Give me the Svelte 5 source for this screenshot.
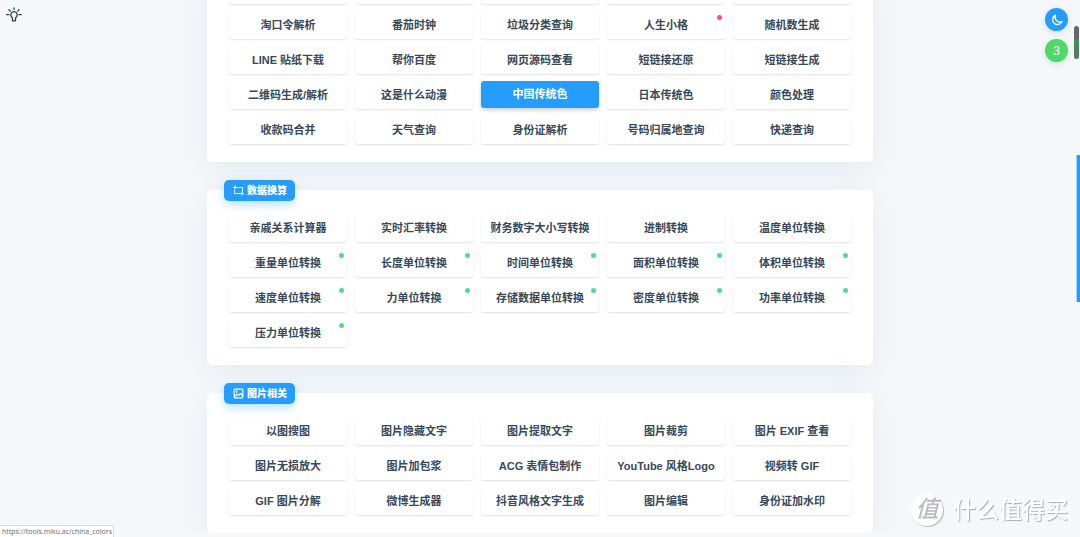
<!-- App.svelte -->
<script>
	let active = '中国传统色';

	const groups = [
		{
			title: '',
			icon: '',
			tools: [
				'',
				'',
				'',
				'',
				'',
				'淘口令解析',
				'番茄时钟',
				'垃圾分类查询',
				{ name: '人生小格', dot: 'hot' },
				'随机数生成',
				'LINE 贴纸下载',
				'帮你百度',
				'网页源码查看',
				'短链接还原',
				'短链接生成',
				'二维码生成/解析',
				'这是什么动漫',
				'中国传统色',
				'日本传统色',
				'颜色处理',
				'收款码合并',
				'天气查询',
				'身份证解析',
				'号码归属地查询',
				'快递查询'
			]
		},
		{
			title: '数据换算',
			icon: 'swap',
			tools: [
				'亲戚关系计算器',
				'实时汇率转换',
				'财务数字大小写转换',
				'进制转换',
				'温度单位转换',
				{ name: '重量单位转换', dot: 'new' },
				{ name: '长度单位转换', dot: 'new' },
				{ name: '时间单位转换', dot: 'new' },
				{ name: '面积单位转换', dot: 'new' },
				{ name: '体积单位转换', dot: 'new' },
				{ name: '速度单位转换', dot: 'new' },
				{ name: '力单位转换', dot: 'new' },
				{ name: '存储数据单位转换', dot: 'new' },
				{ name: '密度单位转换', dot: 'new' },
				{ name: '功率单位转换', dot: 'new' },
				{ name: '压力单位转换', dot: 'new' }
			]
		},
		{
			title: '图片相关',
			icon: 'image',
			tools: [
				'以图搜图',
				'图片隐藏文字',
				'图片提取文字',
				'图片裁剪',
				'图片 EXIF 查看',
				'图片无损放大',
				'图片加包浆',
				'ACG 表情包制作',
				'YouTube 风格Logo',
				'视频转 GIF',
				'GIF 图片分解',
				'微博生成器',
				'抖音风格文字生成',
				'图片编辑',
				'身份证加水印'
			]
		}
	].map((group) => ({
		...group,
		tools: group.tools.map((tool) => (typeof tool === 'string' ? { name: tool } : tool))
	}));
</script>

<button class="bulb" aria-label="提示">
	<svg viewBox="0 0 16 16" width="16" height="16">
		<path d="M8 4.7a3.2 3.2 0 0 0-1.9 5.8c.3.3.4.6.4 1v2.3h3v-2.3c0-.4.1-.7.4-1A3.2 3.2 0 0 0 8 4.7z" />
		<path d="M8 .8v1.7M3 2.8l1.3 1.3M13 2.8l-1.3 1.3M.7 7.7h2.2M13.1 7.7h2.2" />
	</svg>
</button>

<main>
	{#each groups as group}
		<section class="card" class:continued={!group.title}>
			{#if group.title}
				<h2 class="tag">
					{#if group.icon === 'swap'}
						<svg class="swap" viewBox="0 0 11 11" width="11" height="11">
							<path d="M2.500 1 .8 2.500l1.700 1.500M1 2.500h8.500V6" />
							<path d="M8.500 7l1.700 1.500L8.500 10M10 8.500H1.500V5.500" />
						</svg>
					{:else}
						<svg viewBox="0 0 12 12" width="11" height="11">
							<rect x="1.3" y="1.3" width="9.4" height="9.4" rx="1" />
							<path d="M1.500 9.500 4.300 6.800l1.700 1.400L8 6l2.600 2.400" />
							<circle cx="4" cy="4" r=".5" />
						</svg>
					{/if}
					{group.title}
				</h2>
			{/if}
			<div class="tools">
				{#each group.tools as tool}
					{#if tool.name}
						<a
							class="tool"
							class:active={tool.name === active}
							href="#{tool.name}"
							on:mouseenter={() => (active = tool.name)}
						>
							{tool.name}
							{#if tool.dot}
								<span class="dot {tool.dot}"></span>
							{/if}
						</a>
					{:else}
						<span class="tool"></span>
					{/if}
				{/each}
			</div>
		</section>
	{/each}
</main>

<div class="floating">
	<button class="round theme" aria-label="夜间模式">
		<svg viewBox="0 0 12 12" width="12" height="12">
			<path d="M4.300 1.200a4.900 4.900 0 1 0 6.700 6.300A5 5 0 0 1 4.300 1.200z" />
		</svg>
	</button>
	<button class="round count">3</button>
</div>

<div class="scroll-thumb"></div>
<div class="side-bar"></div>

<div class="status">https://tools.miku.ac/china_colors</div>

<div class="watermark">
	<span class="seal">值</span>
	<span>什么值得买</span>
</div>

<style>
	:global(body) {
		background: #f4f8fb;
		overflow: hidden;
		font-family: 'Liberation Sans', 'Noto Sans CJK SC', sans-serif;
		color: #2c3e50;
	}

	button {
		border: none;
		padding: 0;
		cursor: pointer;
		font-family: inherit;
	}

	svg {
		fill: none;
		stroke: currentColor;
		stroke-width: 1.3;
		stroke-linecap: round;
		stroke-linejoin: round;
	}

	.swap {
		stroke-width: 1;
	}

	main {
		display: flex;
		flex-direction: column;
		gap: 28px;
		max-width: 666px;
		margin: 0 auto;
	}

	.card {
		position: relative;
		padding: 25px 22px 18px;
		background: #fff;
		border-radius: 5px;
		box-shadow: 0 8px 30px rgba(44, 62, 80, 0.07);
	}

	/* The first group is already scrolled past its heading */
	.card.continued {
		margin-top: -23px;
		padding-top: 0;
	}

	.tag {
		position: absolute;
		top: -10px;
		left: 17px;
		display: flex;
		align-items: center;
		gap: 3px;
		margin: 0;
		padding: 0 8px 0 9px;
		border-radius: 5px;
		background: #259dff;
		color: #fff;
		font-size: 10px;
		font-weight: 900;
		line-height: 21px;
		box-shadow: 0 4px 8px rgba(37, 157, 255, 0.3);
	}

	.tools {
		display: grid;
		grid-template-columns: repeat(5, 1fr);
		gap: 8px;
	}

	.tool {
		position: relative;
		height: 27px;
		border-radius: 3px;
		background: #fff;
		color: #364859;
		font-size: 11px;
		font-weight: 600;
		line-height: 26px;
		text-align: center;
		text-decoration: none;
		white-space: nowrap;
		box-shadow: 0 1px 2px rgba(0, 0, 0, 0.12);
	}

	.tool.active {
		background: #259dff;
		color: #fff;
		transform: translateY(-1px);
		box-shadow: 0 2px 4px rgba(0, 0, 0, 0.2);
	}

	.dot {
		position: absolute;
		top: 3px;
		right: 3px;
		width: 5px;
		height: 5px;
		border-radius: 50%;
		background: #4ade94;
	}

	.dot.hot {
		background: #ff4d79;
	}

	.bulb {
		position: fixed;
		top: 7px;
		left: 6px;
		width: 16px;
		height: 16px;
		background: none;
		color: #2c3e50;
	}

	.floating {
		position: fixed;
		top: 8px;
		right: 12px;
		display: flex;
		flex-direction: column;
		gap: 8px;
	}

	.round {
		display: flex;
		align-items: center;
		justify-content: center;
		width: 23px;
		height: 23px;
		border-radius: 50%;
		color: #fff;
		font-size: 13px;
		box-shadow: 0 2px 6px rgba(44, 62, 80, 0.15);
	}

	.theme {
		background: #259dff;
	}

	.count {
		background: #4cd964;
	}

	.scroll-thumb {
		position: fixed;
		top: 26px;
		right: 1px;
		width: 5px;
		height: 33px;
		border-radius: 3px;
		background: linear-gradient(#666 40%, #41925a 40%, #5c7564);
	}

	.side-bar {
		position: fixed;
		top: 155px;
		right: 0;
		width: 3px;
		height: 147px;
		background: #259dff;
		border-left: 1px solid #a5d4fa;
	}

	.status {
		position: fixed;
		left: 0;
		bottom: 0;
		padding: 0 1px 0 2px;
		border-top: 1px solid #d5d9dc;
		border-right: 1px solid #d5d9dc;
		border-radius: 0 2px 0 0;
		background: #fff;
		color: #666;
		font-family: 'Open Sans', sans-serif;
		font-size: 7px;
		line-height: 11px;
	}

	.watermark {
		position: fixed;
		right: 12px;
		bottom: 11px;
		display: flex;
		align-items: center;
		gap: 10px;
		color: #fff;
		font-size: 23px;
		font-weight: 500;
		line-height: 32px;
		text-shadow: 1px 1px 1px #a9aeb2;
	}

	.seal {
		width: 32px;
		height: 32px;
		border-radius: 50%;
		background: #fff;
		box-shadow: 1px 1px 1px #b4b9bd;
		color: #b9bdc0;
		font-style: italic;
		line-height: 30px;
		text-align: center;
		text-shadow: none;
	}
</style>
